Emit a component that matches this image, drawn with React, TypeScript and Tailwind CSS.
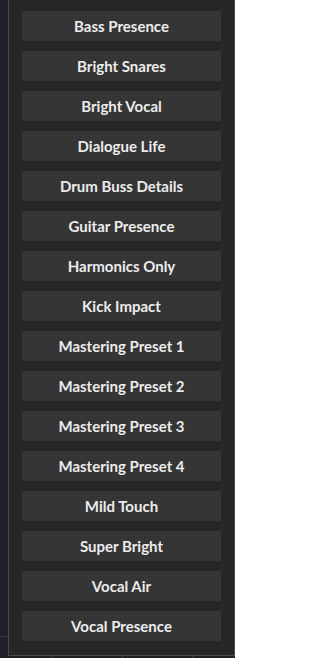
const presets = [
  'Bass Presence',
  'Bright Snares',
  'Bright Vocal',
  'Dialogue Life',
  'Drum Buss Details',
  'Guitar Presence',
  'Harmonics Only',
  'Kick Impact',
  'Mastering Preset 1',
  'Mastering Preset 2',
  'Mastering Preset 3',
  'Mastering Preset 4',
  'Mild Touch',
  'Super Bright',
  'Vocal Air',
  'Vocal Presence',
]

export default function App() {
  return (
    <div className="h-[658px] w-[235px] overflow-hidden bg-[#1e2226] font-['Lato','Liberation_Sans',sans-serif]">
      <div className="flex h-[656px]">
        <div className="flex w-[8px] flex-col">
          <div className="h-[636px]" />
          <div className="h-px bg-[#3a3f45]" />
        </div>
        <div className="flex w-[227px] flex-col gap-[10px] border-x border-b border-[#4a4a4a] bg-[#262626] px-[13px] pb-[14px] pt-[11px]">
          {presets.map((name) => (
            <button
              key={name}
              className="flex h-[30px] w-full items-center justify-center bg-[#353535] text-[15px] font-bold text-[#ececec]"
            >
              {name}
            </button>
          ))}
        </div>
      </div>
      <div className="flex h-[2px]">
        <div className="ml-[52px] w-px bg-[#3a3f45]" />
        <div className="ml-[69px] w-px bg-[#3a3f45]" />
        <div className="ml-[69px] w-px bg-[#3a3f45]" />
      </div>
    </div>
  )
}
